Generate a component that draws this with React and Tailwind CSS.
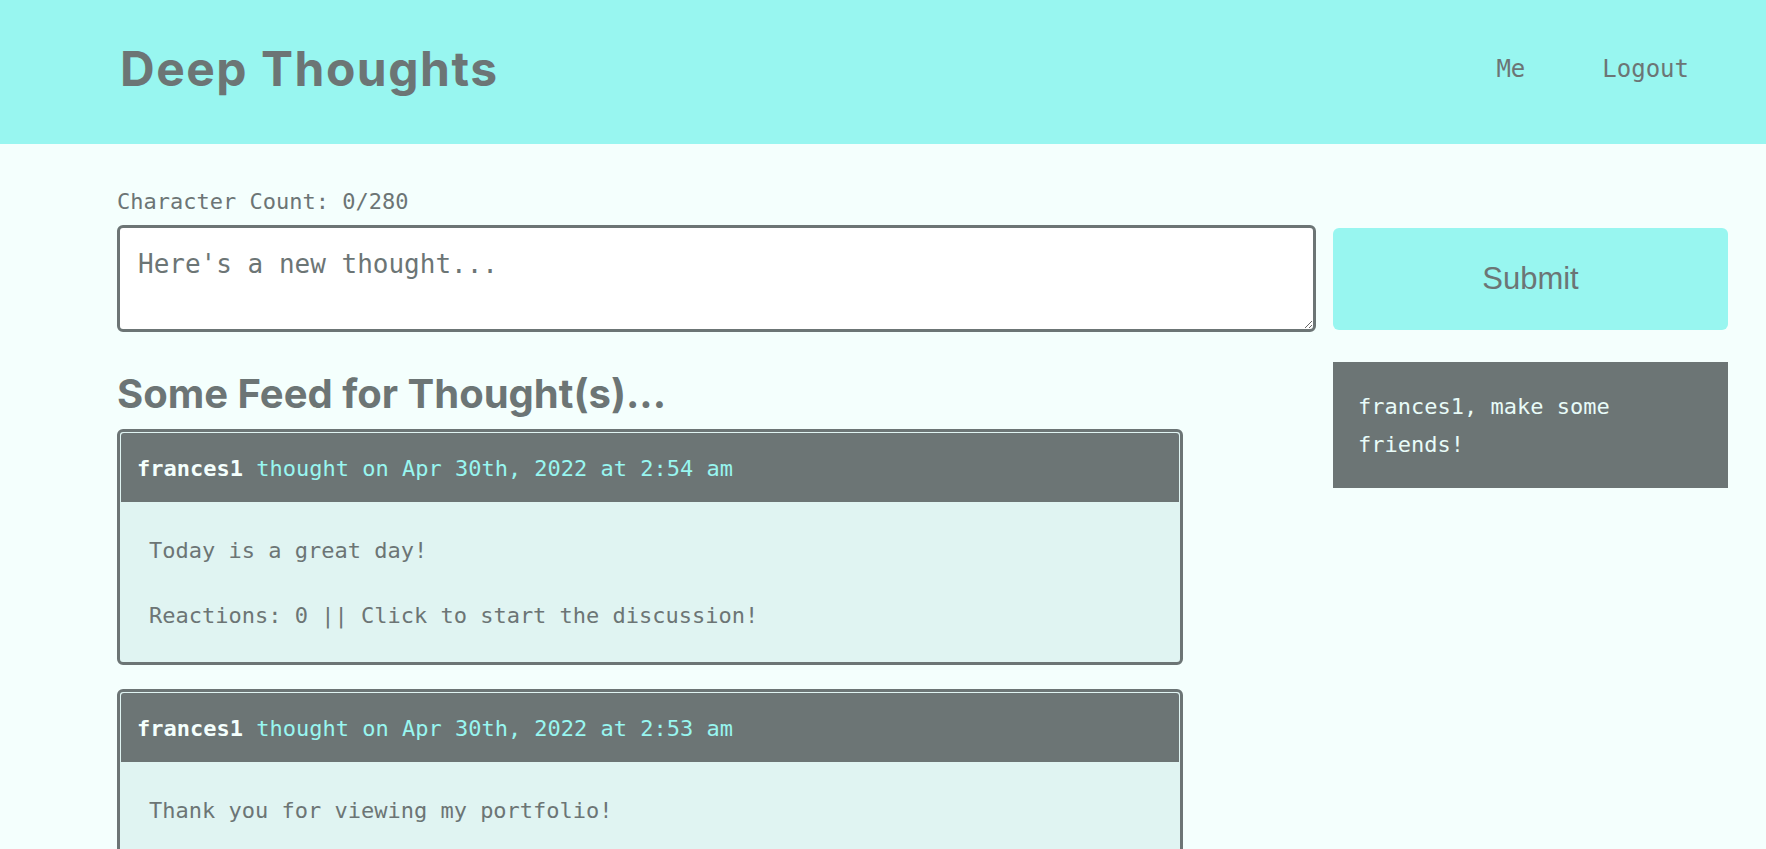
import React, { useState } from 'react';

const thoughts = [
  {
    id: 't1',
    username: 'frances1',
    createdAt: 'Apr 30th, 2022 at 2:54 am',
    text: 'Today is a great day!',
    reactions: 0,
  },
  {
    id: 't2',
    username: 'frances1',
    createdAt: 'Apr 30th, 2022 at 2:53 am',
    text: 'Thank you for viewing my portfolio!',
    reactions: 0,
  },
];

const mono = "font-['DejaVu_Sans_Mono',monospace]";

const ThoughtCard = ({ thought }) => (
  <div className="w-[1066px] rounded-[6px] border-[3px] border-[#6c7575] bg-[#e0f4f2] p-px">
    <div className="flex h-[69px] items-center rounded-t-[3px] bg-[#6c7575] px-4 pt-[2px] text-[22px]">
      <span className="font-bold text-[#f4fffd]">{thought.username}</span>
      <span className="text-[#98f6f0]">&nbsp;thought on {thought.createdAt}</span>
    </div>
    <div className="flex flex-col gap-8 px-[28px] pb-[29px] pt-[32px] text-[22px] leading-[33px] text-[#6c7575]">
      <p>{thought.text}</p>
      <p>
        Reactions: {thought.reactions} || Click to start the discussion!
      </p>
    </div>
  </div>
);

export default function App() {
  const [text, setText] = useState('');

  return (
    <div className={`min-h-screen bg-[#f4fffd] text-[#6c7575] ${mono}`}>
      <header className="flex h-[144px] items-center justify-between bg-[#98f6f0] pb-[6px] pl-[120px] pr-[77px]">
        <h1 className="font-['Inter',sans-serif] text-[48px] font-bold tracking-[1.5px]">Deep Thoughts</h1>
        <nav className="flex gap-[77px] text-[24px]">
          <a href="#me">Me</a>
          <a href="#logout">Logout</a>
        </nav>
      </header>

      <main className="pl-[117px] pr-[38px] pt-[41px]">
        <div className="flex items-end gap-[17px]">
          <div className="flex-1">
            <p className="mb-[7px] text-[22px] leading-[33px]">Character Count: {text.length}/280</p>
            <textarea
              value={text}
              onChange={(e) => setText(e.target.value)}
              placeholder="Here's a new thought..."
              className="block h-[107px] w-full rounded-[6px] border-[3px] border-[#6c7575] bg-white px-[18px] pb-[19px] pt-[21px] text-[26px] leading-[30px] text-[#6c7575] outline-none placeholder:text-[#6c7575]"
            />
          </div>
          <button
            type="button"
            className="mb-[2px] h-[102px] w-[395px] rounded-[6px] bg-[#98f6f0] font-['Liberation_Sans',Arial,sans-serif] text-[31px] text-[#6c7575]"
          >
            Submit
          </button>
        </div>

        <div className="mt-[30px] flex items-start gap-[17px]">
          <div className="flex-1">
            <h2 className="mb-[9px] mt-[6px] font-['Inter',sans-serif] text-[40px] font-bold leading-[52px]">Some Feed for Thought(s)...</h2>
            <div className="flex flex-col gap-[24px] pb-10">
              {thoughts.map((thought) => (
                <ThoughtCard key={thought.id} thought={thought} />
              ))}
            </div>
          </div>
          <aside className="w-[395px] bg-[#6c7575] px-[25px] pb-[24px] pt-[26px] text-[22px] leading-[38px] text-[#e8fbf8]">
            frances1, make some friends!
          </aside>
        </div>
      </main>
    </div>
  );
}
